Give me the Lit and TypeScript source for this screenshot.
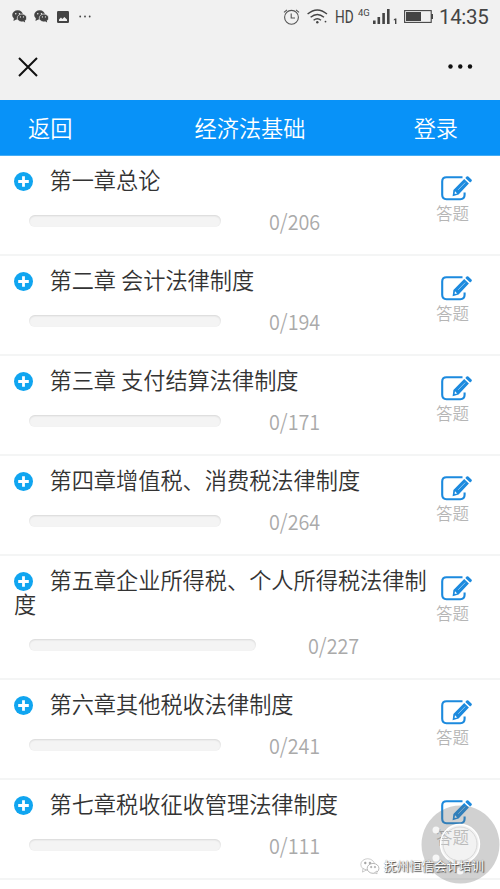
import { LitElement, html, css, svg } from "lit";
import { customElement, property } from "lit/decorators.js";
import { classMap } from "lit/directives/class-map.js";

interface Chapter {
  title: string;
  total: number;
  long?: boolean;
}

const CHAPTERS: Chapter[] = [
  { title: "第一章总论", total: 206 },
  { title: "第二章 会计法律制度", total: 194 },
  { title: "第三章 支付结算法律制度", total: 171 },
  { title: "第四章增值税、消费税法律制度", total: 264 },
  { title: "第五章企业所得税、个人所得税法律制度", total: 227, long: true },
  { title: "第六章其他税收法律制度", total: 241 },
  { title: "第七章税收征收管理法律制度", total: 111 },
];

const bubbles = (body: string, eye: string, edge: string) => svg`
  <ellipse cx="6" cy="5" rx="5.8" ry="4.9" fill=${body} />
  <path d="M2 8.5L1.6 11.5L5 9.6Z" fill=${body} />
  <ellipse cx="10.6" cy="8.3" rx="5" ry="4.2" fill=${body} stroke=${edge} stroke-width=".7" />
  <path d="M12 11.8L14 13L13.7 10.6Z" fill=${body} />
  <circle cx="4" cy="3.7" r=".8" fill=${eye} /><circle cx="8" cy="3.7" r=".8" fill=${eye} />
  <circle cx="9" cy="7.2" r=".65" fill=${eye} /><circle cx="12.2" cy="7.2" r=".65" fill=${eye} />
`;

@customElement("status-bar")
class StatusBar extends LitElement {
  static styles = css`
    :host { display: flex; height: 33px; align-items: center; color: #444; padding: 0 11px 0 12px;
      font-family: Roboto, sans-serif; font-weight: 400; box-sizing: border-box; }
    svg { display: block; flex: none; }
    .chat { margin-right: 7px; }
    .pic { margin: 0 10px 0 1px; }
    .space { flex: 1; }
    .clock { margin-right: 7px; }
    .wifi { margin-right: 7px; }
    .hd { font-size: 17.5px; width: 22px; transform: scaleX(.78); transform-origin: 0 50%; }
    .net { font-size: 9.5px; margin: -8px 3px 0 1px; width: 12px; }
    .signal { margin-right: 7px; }
    .time { font-size: 20.5px; line-height: 34px; width: 50px; margin-left: 6px; letter-spacing: -.35px; white-space: nowrap; }
  `;
  render() {
    const chat = html`<svg class="chat" width="15" height="13" viewBox="0 0 16 13.4">${bubbles("#444", "#f1f1f1", "#f1f1f1")}</svg>`;
    return html`
      ${chat}${chat}
      <svg class="pic" width="12" height="12" viewBox="0 0 12 12">
        <rect width="12" height="12" rx="1.2" fill="#444" />
        <path d="M2 10V8.6L4 6.6L5.3 8L7.4 6L10 8.6V10Z" fill="#f1f1f1" />
      </svg>
      <svg width="12" height="3" viewBox="0 0 12 3" fill="#444">
        <circle cx="1.2" cy="1.5" r=".9" /><circle cx="6" cy="1.5" r=".9" /><circle cx="10.7" cy="1.5" r=".9" />
      </svg>
      <span class="space"></span>
      <svg class="clock" width="17" height="16" viewBox="0 0 17 16" fill="none" stroke="#555" stroke-width="1.1">
        <circle cx="8.5" cy="8.3" r="6.9" />
        <path d="M1 3.4L4 .8M16 3.4L13 .8M8.2 4.5V9H12" />
      </svg>
      <svg class="wifi" width="21" height="15" viewBox="0 0 21 15" fill="none" stroke="#444" stroke-width="1.4">
        <path d="M.6 5Q10.3 -3.2 20 5M3.6 8.2Q10.3 2.7 17 8.2M6.6 11.2Q10.3 8.3 14 11.2" />
        <circle cx="10.3" cy="13.3" r="1.2" fill="#444" stroke="none" />
        <circle cx="18.5" cy="12.6" r=".9" fill="#444" stroke="none" />
      </svg>
      <span class="hd">HD</span><span class="net">4G</span>
      <svg class="signal" width="24" height="15" viewBox="0 0 24 15" fill="#444">
        <path d="M0 11.5h2.6V15H0zM4.5 8h2.6v7H4.5zM9.3 4h2.6v11H9.3zM14 0h2.6v15H14zM22 9.5h1.4V15H22v-4l-1.2.5v-1z" />
      </svg>
      <svg width="29" height="13" viewBox="0 0 29 13">
        <rect x=".6" y=".6" width="26.6" height="11.8" fill="none" stroke="#444" stroke-width="1.1" />
        <path d="M2 2h15v9H2zM27.2 4H29v5h-1.8z" fill="#444" />
      </svg>
      <span class="time">14:35</span>
    `;
  }
}

@customElement("chapter-row")
class ChapterRow extends LitElement {
  @property({ attribute: false }) chapter!: Chapter;
  static styles = css`
    :host { display: block; background: #fff; }
    .row { display: flex; box-sizing: border-box; height: 100px; padding: 11px 24px 0 14px;
      border-bottom: 2px solid #f4f5f5; }
    .row.long { height: 124px; }
    .main { width: 422px; flex: none; }
    .title { font-size: 22.2px; line-height: 24px; color: #333; }
    .plus { width: 19px; height: 19px; margin: -2px 16.5px 0 0; vertical-align: -2px; }
    .progress { display: flex; align-items: center; height: 24px; margin: 18px 0 0 15px; }
    .bar { width: 192px; height: 12px; border-radius: 6px; background: #f4f4f4;
      box-shadow: inset 0 1px 2px rgba(0, 0, 0, .12); }
    .count { margin: -1px 0 0 48px; font-size: 21.4px; line-height: 24px; color: #aaa;
      transform: scaleX(.925); transform-origin: 0 50%; }
    .long .bar { width: 227px; }
    .long .count { margin-left: 52px; }
    .answer { display: flex; flex-direction: column; align-items: flex-start; padding-top: 7px; }
    .edit { display: block; width: 32px; height: 28px; margin: 0 0 1px 5px; }
    .label { font-size: 16.5px; line-height: 20px; color: #b5b5b5; white-space: nowrap; }
  `;
  render() {
    const c = this.chapter;
    return html`
      <div class=${classMap({ row: true, long: !!c.long })}>
        <div class="main">
          <div class="title"><svg class="plus" viewBox="0 0 19 19">
            <circle cx="9.5" cy="9.5" r="9.5" fill="#10a5f0" />
            <path d="M9.5 4.2V14.8M4.2 9.5H14.8" stroke="#fff" stroke-width="2.8" />
          </svg>${c.title}</div>
          <div class="progress"><div class="bar"></div><span class="count">0/${c.total}</span></div>
        </div>
        <div class="answer">
          <svg class="edit" viewBox="0 0 32 28">
            <path d="M21.5 3.2H5.5Q1.2 3.2 1.2 7.5V20.8Q1.2 25.2 5.5 25.2H19.3Q23.6 25.2 23.6 20.8V18.4" fill="none" stroke="#1c8ade" stroke-width="2.1" />
            <path d="M11.6 22.2L12.4 15.9L23.2 5L27.9 9.5L17.6 20.6ZM24.3 3.9L25.6 2.6Q26.4 1.9 27.3 2.6L30.5 5.6Q31.3 6.5 30.6 7.3L29.1 8.6Z" fill="#1c8ade" />
            <path d="M14 17.2L13.6 20.1L16.2 19.4Z" fill="#fff" />
            <path d="M17.2 15.8L24.2 8.6" stroke="#fff" stroke-width=".5" />
          </svg>
          <span class="label">答题</span>
        </div>
      </div>
    `;
  }
}

@customElement("app-root")
class AppRoot extends LitElement {
  static styles = css`
    :host { display: block; position: relative; height: 889px; overflow: hidden; background: #fff;
      font-family: "Noto Sans CJK SC", sans-serif; font-weight: 350; }
    .top { height: 100px; background: #f1f1f1; }
    .nav { display: flex; justify-content: space-between; align-items: center; height: 67px; padding: 0 27px 0 18px; box-sizing: border-box; }
    .header { display: grid; grid-template-columns: 1fr auto 1fr; align-items: center; height: 56px;
      padding: 0 42px 2px 42px; box-sizing: border-box; background: #0892f8; color: #fff; font-size: 22.2px;
      border-bottom: 1px solid #45adf5; }
    .back { margin-left: -14px; }
    .login { text-align: right; }
    .touch { position: absolute; left: 421px; top: 805px; width: 79px; height: 79px; }
    .mark { position: absolute; left: 360px; top: 855px; display: flex; align-items: center; gap: 4px;
      font-size: 12.5px; line-height: 22px; color: #fff; white-space: nowrap; font-weight: 400;
      text-shadow: 1px 1px 1px #444, 0 0 1px #555; }
  `;
  render() {
    return html`
      <div class="top">
        <status-bar></status-bar>
        <div class="nav">
          <svg width="20" height="20" viewBox="0 0 20 20"><path d="M1 1L19 19M19 1L1 19" stroke="#111" stroke-width="2" /></svg>
          <svg width="25" height="5" viewBox="0 0 25 5" fill="#111"><circle cx="2.5" cy="2.5" r="2.2" /><circle cx="12.3" cy="2.5" r="2.2" /><circle cx="22" cy="2.5" r="2.2" /></svg>
        </div>
      </div>
      <div class="header"><span class="back">返回</span><span>经济法基础</span><span class="login">登录</span></div>
      <div class="list">${CHAPTERS.map((c) => html`<chapter-row .chapter=${c}></chapter-row>`)}</div>
      <svg class="touch" viewBox="0 0 79 79">
        <path fill-rule="evenodd" d="M39.5 .5a39 39 0 1 0 .01 0ZM39 19.5a19.5 19.5 0 1 1-.01 0Z" fill="#666" fill-opacity=".3" />
        <circle cx="39" cy="39" r="19.5" fill="#ccc" fill-opacity=".25" stroke="#fff" stroke-width="1.4" />
        <circle cx="39" cy="39" r="17" fill="none" stroke="#ccc" stroke-width=".7" />
        <g fill="#fff" fill-opacity=".8"><circle cx="15" cy="25" r="3.5" /><circle cx="15" cy="53" r="3.5" /><circle cx="39" cy="66" r="3.5" /></g>
      </svg>
      <div class="mark">
        <svg width="20" height="17" viewBox="-.5 -.5 17 14.4" stroke="#aaa" stroke-width=".5">${bubbles("#fff", "#999", "#aaa")}</svg>
        <span>抚州恒信会计培训</span>
      </div>
    `;
  }
}
